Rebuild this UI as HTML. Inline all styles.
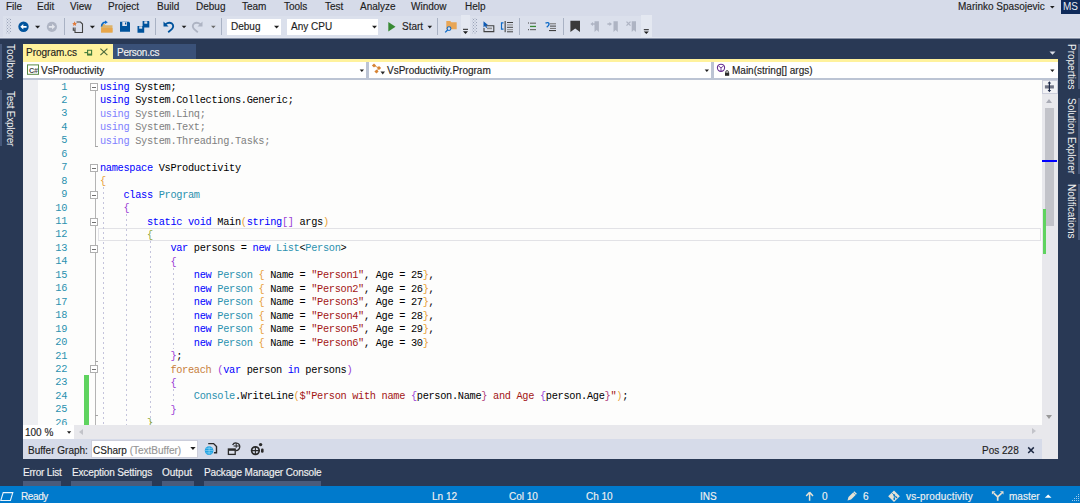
<!DOCTYPE html>
<html><head><meta charset="utf-8">
<style>
*{margin:0;padding:0;box-sizing:border-box}
html,body{width:1080px;height:503px;overflow:hidden;background:#293955;font-family:"Liberation Sans",sans-serif;font-size:10px;color:#1E1E1E}
.a{position:absolute}
.t{position:absolute;white-space:pre;line-height:12px;-webkit-text-stroke:0.15px}
.w{color:#F1F1F1}
.sep{position:absolute;top:18px;width:1px;height:17px;background:#A9B2C4}
.grip{position:absolute;top:18px;width:5px;height:16px;background-image:radial-gradient(circle,#9AA3B8 0.55px,transparent 0.75px),radial-gradient(circle,#9AA3B8 0.55px,transparent 0.75px);background-size:3px 3px;background-position:0 0,1.5px 1.5px}
.dd{position:absolute;width:0;height:0;border-left:2.5px solid transparent;border-right:2.5px solid transparent;border-top:3px solid #1E1E1E}
.combo{position:absolute;background:#FFFFFF}
.vt{position:absolute;writing-mode:vertical-rl;white-space:pre;color:#F1F1F1;font-size:10px;line-height:12px}
.code{position:absolute;left:100px;font-family:"Liberation Mono",monospace;font-size:10.3px;letter-spacing:-0.314px;white-space:pre;line-height:13.45px;color:#000}
.ln{position:absolute;font-family:"Liberation Mono",monospace;font-size:10.3px;letter-spacing:-0.314px;white-space:pre;color:#2B91AF;text-align:right;width:30px;line-height:13.45px}
.k{color:#0000FF}.ty{color:#2B91AF}.s{color:#A31515}.g{color:#808080}.gk{color:#8080FF}
.fk{color:#C8803C}.b2r{color:#B0407A}
.b1{color:#E8A13A}.b2{color:#9B3FD6}.b3{color:#92A83A}
.box{position:absolute;left:90px;width:8px;height:8px;border:1px solid #B0B0B0;background:#fff}
.box:after{content:"";position:absolute;left:1px;top:2.5px;width:4px;height:1px;background:#707070}
.tick{position:absolute;left:95px;width:3px;height:1px;background:#A5A5A5}
.guide{position:absolute;width:1px;background-image:linear-gradient(#C4C4DC 45%,transparent 45%);background-size:1px 5px}
</style></head><body>
<!-- menu + toolbar -->
<div class="a" style="left:0;top:0;width:1080px;height:39px;background:#D6DBE9"></div>
<div class="a" style="left:3px;top:16px;width:462px;height:21px;background:#DBE0EC"></div>
<div class="a" style="left:470px;top:16px;width:182px;height:21px;background:#DBE0EC"></div>
<div class="a" style="left:461px;top:15px;width:9px;height:22px;background:#E4E8F1"></div>
<div class="a" style="left:641px;top:15px;width:11px;height:22px;background:#E4E8F1"></div>
<div class="a" style="left:0;top:37px;width:1080px;height:1px;background:#E0E4EE"></div>
<div class="a" style="left:0;top:38px;width:1080px;height:1px;background:#8690A6"></div>

<div class="t" style="left:6px;top:1px">File</div>
<div class="t" style="left:37px;top:1px">Edit</div>
<div class="t" style="left:70px;top:1px">View</div>
<div class="t" style="left:108px;top:1px">Project</div>
<div class="t" style="left:157px;top:1px">Build</div>
<div class="t" style="left:196px;top:1px">Debug</div>
<div class="t" style="left:242px;top:1px">Team</div>
<div class="t" style="left:284px;top:1px">Tools</div>
<div class="t" style="left:325px;top:1px">Test</div>
<div class="t" style="left:360px;top:1px">Analyze</div>
<div class="t" style="left:411px;top:1px">Window</div>
<div class="t" style="left:465px;top:1px">Help</div>
<div class="t" style="left:958px;top:1px">Marinko Spasojevic</div>
<div class="a" style="left:1061px;top:0;width:19px;height:14px;background:#0F2A5A"></div>
<div class="t" style="left:1063px;top:1px;color:#E6E8F0;-webkit-text-stroke:0">MS</div>

<div class="grip" style="left:6px"></div>
<div class="sep" style="left:64px"></div>
<div class="sep" style="left:155px"></div>
<div class="sep" style="left:221px"></div>
<div class="combo" style="left:227px;top:19px;width:54px;height:16px"></div>
<div class="t" style="left:231px;top:21px">Debug</div>
<div class="combo" style="left:287px;top:19px;width:91px;height:16px"></div>
<div class="t" style="left:291px;top:21px">Any CPU</div>
<div class="t" style="left:402px;top:21px">Start</div>
<div class="sep" style="left:437px"></div>
<div class="grip" style="left:472px"></div>
<div class="sep" style="left:519px"></div>
<div class="sep" style="left:563px"></div>
<!-- side bars -->
<div class="a" style="left:0;top:44px;width:2px;height:36px;background:#46587A"></div>
<div class="a" style="left:0;top:90px;width:2px;height:56px;background:#46587A"></div>
<div class="vt" style="left:4px;top:44px">Toolbox</div>
<div class="vt" style="left:4px;top:91px;letter-spacing:-0.25px">Test Explorer</div>
<div class="a" style="left:1078px;top:44px;width:2px;height:45px;background:#46587A"></div>
<div class="a" style="left:1078px;top:98px;width:2px;height:76px;background:#46587A"></div>
<div class="a" style="left:1078px;top:184px;width:2px;height:56px;background:#46587A"></div>
<div class="vt" style="left:1065px;top:44px">Properties</div>
<div class="vt" style="left:1065px;top:98px">Solution Explorer</div>
<div class="vt" style="left:1065px;top:184px">Notifications</div>

<!-- tabs -->
<div class="a" style="left:23px;top:44px;width:90px;height:17px;background:#FFF29D"></div>
<div class="a" style="left:113px;top:44px;width:83px;height:15px;background:#3A5178"></div>
<div class="t" style="left:26px;top:47px">Program.cs</div>
<div class="t w" style="left:117px;top:47px;letter-spacing:-0.25px">Person.cs</div>
<div class="a" style="left:23px;top:59px;width:1035px;height:3px;background:#FFF29D"></div>

<!-- navbar -->
<div class="a" style="left:23px;top:62px;width:1035px;height:16px;background:#FFFFFF"></div>
<div class="a" style="left:23px;top:78px;width:1035px;height:2px;background:#BCC4D4"></div>
<div class="a" style="left:366px;top:62px;width:3px;height:16px;background:#BCC4D4"></div>
<div class="a" style="left:711px;top:62px;width:3px;height:16px;background:#BCC4D4"></div>
<div class="t" style="left:41px;top:65px">VsProductivity</div>
<div class="t" style="left:387px;top:65px">VsProductivity.Program</div>
<div class="t" style="left:732px;top:65px">Main(string[] args)</div>

<!-- editor -->
<div class="a" style="left:23px;top:80px;width:1019px;height:345px;background:#FDFDFC"></div>
<div class="a" style="left:23px;top:80px;width:15px;height:345px;background:#EDEEF1"></div>
<div class="a" style="left:98px;top:228px;width:943px;height:13px;border:1px solid #E2E2E6"></div>
<div class="a" style="left:84px;top:375px;width:5px;height:50px;background:#5FD35F"></div>
<div class="a" style="left:95px;top:91px;width:1px;height:56px;background:#B4B4B4"></div>
<div class="tick" style="top:146px"></div>
<div class="a" style="left:95px;top:172px;width:1px;height:253px;background:#B4B4B4"></div>
<div class="tick" style="top:361px"></div>
<div class="tick" style="top:415px"></div>
<div class="box" style="top:83px"></div>
<div class="box" style="top:164px"></div>
<div class="box" style="top:191px"></div>
<div class="box" style="top:218px"></div>
<div class="box" style="top:245px"></div>
<div class="box" style="top:365px"></div>
<div class="guide" style="left:103px;top:187px;height:238px"></div>
<div class="guide" style="left:126px;top:214px;height:211px"></div>
<div class="guide" style="left:150px;top:241px;height:184px"></div>
<div class="guide" style="left:173px;top:268px;height:81px"></div>
<div class="guide" style="left:173px;top:389px;height:14px"></div>
<div class="code" id="code" style="top:81px"><span class="k">using</span> System;
<span class="k">using</span> System.Collections.Generic;
<span class="gk">using</span><span class="g"> System.Linq;</span>
<span class="gk">using</span><span class="g"> System.Text;</span>
<span class="gk">using</span><span class="g"> System.Threading.Tasks;</span>

<span class="k">namespace</span> VsProductivity
<span class="b1">{</span>
    <span class="k">class</span> <span class="ty">Program</span>
    <span class="b2">{</span>
        <span class="k">static</span> <span class="k">void</span> Main<span class="b1">(</span><span class="k">string</span><span class="b2">[]</span> args<span class="b1">)</span>
        <span class="b3">{</span>
            <span class="k">var</span> persons = <span class="k">new</span> <span class="ty">List</span>&lt;<span class="ty">Person</span>&gt;
            <span class="b2">{</span>
                <span class="k">new</span> <span class="ty">Person</span> <span class="b1">{</span> Name = <span class="s">"Person1"</span>, Age = 25<span class="b1">}</span>,
                <span class="k">new</span> <span class="ty">Person</span> <span class="b1">{</span> Name = <span class="s">"Person2"</span>, Age = 26<span class="b1">}</span>,
                <span class="k">new</span> <span class="ty">Person</span> <span class="b1">{</span> Name = <span class="s">"Person3"</span>, Age = 27<span class="b1">}</span>,
                <span class="k">new</span> <span class="ty">Person</span> <span class="b1">{</span> Name = <span class="s">"Person4"</span>, Age = 28<span class="b1">}</span>,
                <span class="k">new</span> <span class="ty">Person</span> <span class="b1">{</span> Name = <span class="s">"Person5"</span>, Age = 29<span class="b1">}</span>,
                <span class="k">new</span> <span class="ty">Person</span> <span class="b1">{</span> Name = <span class="s">"Person6"</span>, Age = 30<span class="b1">}</span>
            <span class="b2">}</span>;
            <span class="fk">foreach</span> <span class="b2">(</span><span class="k">var</span> person <span class="k">in</span> persons<span class="b2">)</span>
            <span class="b2">{</span>
                <span class="ty">Console</span>.WriteLine<span class="b1">(</span><span class="s">$"Person with name </span><span class="b2">{</span>person.Name<span class="b2r">}</span><span class="s"> and Age </span><span class="b2">{</span>person.Age<span class="b2r">}</span><span class="s">"</span><span class="b1">)</span>;
            <span class="b2">}</span>
        <span class="b3">}</span></div>
<div class="ln" style="left:37px;top:80.5px">1
2
3
4
5
6
7
8
9
10
11
12
13
14
15
16
17
18
19
20
21
22
23
24
25
26</div>
<!-- scrollbar column -->
<div class="a" style="left:1042px;top:80px;width:16px;height:379px;background:#E8E8EC"></div>
<div class="a" style="left:1042px;top:80px;width:16px;height:14px;background:#F2F2F5;border:1px solid #CCCEDB"></div>
<div class="a" style="left:1045px;top:108px;width:9px;height:118px;background:#C2C3C9"></div>
<div class="a" style="left:1043px;top:209px;width:3px;height:45px;background:#5FD35F"></div>
<div class="a" style="left:1042px;top:160px;width:15px;height:2px;background:#0000FF"></div>
<div class="dd" style="left:1046px;top:99px;border-top:0;border-bottom:4px solid #A9ABB5;border-left-width:3.5px;border-right-width:3.5px"></div>
<div class="dd" style="left:1046px;top:415px;border-top:4px solid #999;border-left-width:3.5px;border-right-width:3.5px"></div>

<!-- hscroll + zoom -->
<div class="a" style="left:23px;top:425px;width:1019px;height:14px;background:#E8E8EC"></div>
<div class="combo" style="left:23px;top:425px;width:51px;height:14px"></div>
<div class="t" style="left:25px;top:427px">100 %</div>
<div class="a" style="left:79px;top:429px;width:0;height:0;border-top:3.5px solid transparent;border-bottom:3.5px solid transparent;border-right:4px solid #C2C3C9"></div>
<div class="a" style="left:1032px;top:428px;width:0;height:0;border-top:3.5px solid transparent;border-bottom:3.5px solid transparent;border-left:4px solid #C2C3C9"></div>

<!-- buffer graph bar -->
<div class="a" style="left:23px;top:439px;width:1019px;height:20px;background:#D6DBE9"></div>
<div class="t" style="left:28px;top:445px">Buffer Graph:</div>
<div class="combo" style="left:91px;top:440px;width:107px;height:18px;border:1px solid #CCCEDB"></div>
<div class="t" style="left:93px;top:445px">CSharp <span style="color:#969696">(TextBuffer)</span></div>
<div class="t" style="left:982px;top:445px">Pos 228</div>

<!-- bottom tabs -->
<div class="t w" style="left:23px;top:467px;letter-spacing:-0.2px">Error List</div>
<div class="t w" style="left:72px;top:467px;letter-spacing:-0.15px">Exception Settings</div>
<div class="t w" style="left:162px;top:467px">Output</div>
<div class="t w" style="left:204px;top:467px;letter-spacing:-0.14px">Package Manager Console</div>
<div class="a" style="left:23px;top:481px;width:38px;height:5px;background:#4A5B7B"></div>
<div class="a" style="left:71px;top:481px;width:81px;height:5px;background:#4A5B7B"></div>
<div class="a" style="left:162px;top:481px;width:32px;height:5px;background:#4A5B7B"></div>
<div class="a" style="left:204px;top:481px;width:117px;height:5px;background:#4A5B7B"></div>

<!-- status bar -->
<div class="a" style="left:0;top:486px;width:1080px;height:17px;background:#007ACC"></div>
<div class="t w" style="left:21px;top:491px;letter-spacing:-0.4px">Ready</div>
<div class="t w" style="left:432px;top:491px">Ln 12</div>
<div class="t w" style="left:509px;top:491px">Col 10</div>
<div class="t w" style="left:586px;top:491px">Ch 10</div>
<div class="t w" style="left:700px;top:491px">INS</div>
<div class="t w" style="left:822px;top:491px">0</div>
<div class="t w" style="left:863px;top:491px">6</div>
<div class="t w" style="left:906px;top:491px;letter-spacing:0.2px">vs-productivity</div>
<div class="t w" style="left:1009px;top:491px">master</div>
<svg class="a" style="left:0;top:0" width="1080" height="503" viewBox="0 0 1080 503">
<!-- back / forward -->
<circle cx="23.5" cy="26.8" r="5.2" fill="#00539C"/>
<path d="M20.3 26.8 L23.3 24 L23.3 25.9 L26.6 25.9 L26.6 27.7 L23.3 27.7 L23.3 29.6 Z" fill="#fff"/>
<circle cx="51.9" cy="26.8" r="5.1" fill="#AEB4C3"/>
<path d="M55.1 26.8 L52.1 24 L52.1 25.9 L48.8 25.9 L48.8 27.7 L52.1 27.7 L52.1 29.6 Z" fill="#E4E7EE"/>
<path d="M35 25.8 h5.2 l-2.6 2.7z" fill="#1E1E1E"/>
<!-- new project -->
<path d="M76.5 22 h4 l2 2 v8.5 h-7.5 v-5" fill="none" stroke="#424242" stroke-width="1.1"/>
<path d="M73.3 27.5 v2.8 h1.6" fill="none" stroke="#424242" stroke-width="1.1"/>
<path d="M72.2 23.2 l1.6 -0.3 l0.8 -1.6 l0.8 1.6 l1.6 0.3 l-1.2 1.1 l0.3 1.6 l-1.5 -0.8 l-1.5 0.8 l0.3 -1.6z" fill="#E07A3A"/>
<path d="M89.8 25.8 h5.2 l-2.6 2.7z" fill="#1E1E1E"/>
<!-- open -->
<path d="M101 24 h3.5 l1 1.2 h7 v7.3 h-11.5z" fill="#DDB36A"/>
<path d="M101.5 28 h11 v4.5 h-11.5z" fill="#E8A64A"/>
<path d="M101.5 26.5 q0.5 -4.5 4.5 -4.2" fill="none" stroke="#0E6AC7" stroke-width="1.6"/>
<path d="M105 20.5 l2.8 1.8 l-2.8 1.8z" fill="#0E6AC7"/>
<!-- save -->
<path d="M120 21.8 h9 l1 1 v9 h-10z" fill="#00539C"/>
<rect x="122.3" y="22" width="4.6" height="4" fill="#DCE1EC"/>
<rect x="125" y="22.5" width="1.2" height="2" fill="#00539C"/>
<!-- save all -->
<path d="M142.6 20.9 h6 l0.7 0.7 v6 h-6.7z" fill="#00539C"/>
<rect x="144.3" y="21.3" width="3" height="2.4" fill="#DCE1EC"/>
<path d="M137.5 26 h6 l0.7 0.7 v6 h-6.7z" fill="#00539C"/>
<rect x="139.2" y="26.3" width="3" height="2.4" fill="#DCE1EC"/>
<!-- undo / redo -->
<path d="M165.5 24.2 q3.5 -2.6 6.5 -0.6 q2.5 2.4 -0.2 5.6 l-3.6 3" fill="none" stroke="#00539C" stroke-width="1.8"/>
<path d="M163.5 21.5 v5 h5z" fill="#00539C"/>
<path d="M181.7 25.8 h4.7 l-2.35 2.5z" fill="#1E1E1E"/>
<path d="M200.5 24.2 q-3.5 -2.6 -6.5 -0.6 q-2.5 2.4 0.2 5.6 l3.6 3" fill="none" stroke="#AEB4C3" stroke-width="1.8"/>
<path d="M202.5 21.5 v5 h-5z" fill="#AEB4C3"/>
<path d="M211 25.8 h4.7 l-2.35 2.5z" fill="#6A6A6A"/>
<!-- start -->
<path d="M388.3 22 L395.5 26.8 L388.3 31.5z" fill="#388A34"/>
<!-- find in files -->
<path d="M446.3 21 h4 l1 1.2 h5.4 v7.1 h-10.4z" fill="#E8A656"/>
<circle cx="449" cy="28.6" r="1.9" fill="#DCE1EC" stroke="#0E6AC7" stroke-width="1.1"/>
<path d="M447.6 30 l-2.4 2.4" stroke="#0E6AC7" stroke-width="1.3"/>
<rect x="463" y="28.8" width="5" height="1" fill="#1E1E1E"/>
<path d="M463 31.2 h5 l-2.5 2.8z" fill="#1E1E1E"/>
<!-- toolbar 2 -->
<path d="M483.5 21.3 l4.5 3.8 l-2 0.4 l1.2 2 l-1 0.5 l-1.2 -2 l-1.5 1.4z" fill="#0E5BB5"/>
<path d="M486 25.8 h7.8 v5.8 h-9.8 v-3.5" fill="none" stroke="#424242" stroke-width="1.1"/>
<rect x="487" y="27.6" width="5" height="1.6" fill="#8E8E8E"/>
<path d="M503.5 22.8 h-2 v6.4 h2" fill="none" stroke="#0E6AC7" stroke-width="1.2"/>
<rect x="504.6" y="21" width="1.1" height="11.2" fill="#424242"/>
<rect x="507" y="22" width="6" height="1" fill="#424242"/>
<rect x="507" y="24.4" width="6" height="1" fill="#8A8A8A"/>
<rect x="507" y="26.8" width="6" height="1" fill="#424242"/>
<rect x="507" y="29.2" width="6" height="1" fill="#8A8A8A"/>
<rect x="507" y="31.3" width="6" height="1" fill="#424242"/>
<!-- comment / uncomment -->
<rect x="528" y="22.5" width="1" height="1" fill="#424242"/>
<rect x="530" y="22.6" width="6" height="1.2" fill="#6E6E6E"/>
<rect x="530" y="25.8" width="6" height="1.3" fill="#388A34"/>
<rect x="530" y="29" width="6" height="1.2" fill="#6E6E6E"/>
<rect x="528" y="29.2" width="1" height="1" fill="#424242"/>
<path d="M545.5 23.2 q3 -1.5 3.6 0.8 q0 1.5 -2.4 3.2" fill="none" stroke="#0E6AC7" stroke-width="1.4"/>
<rect x="550" y="23.3" width="6" height="1" fill="#6E6E6E"/>
<rect x="550" y="25.6" width="6" height="1" fill="#424242"/>
<rect x="550" y="27.9" width="6" height="1" fill="#6E6E6E"/>
<rect x="549" y="30" width="7" height="1.1" fill="#424242"/>
<!-- bookmarks -->
<path d="M570.4 20.8 h9.6 v11.1 l-4.8 -3.4 l-4.8 3.4z" fill="#3A3A3A"/>
<path d="M594.5 21.2 h4.4 v10.7 l-2.2 -1.8 l-2.2 1.8z" fill="#AEB4C3"/>
<path d="M590.4 24 l2.6 -2 v1.3 h2 v1.4 h-2 v1.3z" fill="#AEB4C3"/>
<path d="M613.5 21.2 h4.3 v10.7 l-2.15 -1.8 l-2.15 1.8z" fill="#AEB4C3"/>
<path d="M612 24 l-2.6 -2 v1.3 h-2 v1.4 h2 v1.3z" fill="#AEB4C3"/>
<path d="M631.7 21.2 h4.3 v10.7 l-2.15 -1.8 l-2.15 1.8z" fill="#AEB4C3"/>
<path d="M626.5 21.6 l4 4 m0 -4 l-4 4" stroke="#AEB4C3" stroke-width="1.3"/>
<rect x="643.8" y="29.2" width="5" height="1" fill="#1E1E1E"/>
<path d="M643.8 31.4 h5 l-2.5 2.7z" fill="#1E1E1E"/>
<path d="M274 25.8 h5.2 l-2.6 2.7z" fill="#1E1E1E"/>
<path d="M372 25.8 h5 l-2.5 2.7z" fill="#1E1E1E"/>
<path d="M427.5 25.8 h4.6 l-2.3 2.6z" fill="#1E1E1E"/>
<path d="M1050 6 h4.6 l-2.3 2.4z" fill="#1E1E1E"/>
</svg>
<svg class="a" style="left:0;top:0" width="1080" height="503" viewBox="0 0 1080 503">
<!-- tab pin / close -->
<path d="M84.4 52.6 h3" stroke="#3F7A3A" stroke-width="1.1"/>
<path d="M87.6 50.3 h4 v4.6 h-4z" fill="none" stroke="#3F7A3A" stroke-width="1.1"/>
<rect x="87.4" y="53.6" width="4.6" height="1.6" fill="#3F7A3A"/>
<path d="M100.4 48.6 l7 6.5 m0 -6.5 l-7 6.5" stroke="#4E6B3C" stroke-width="1.2"/>
<!-- C# icon -->
<rect x="27.5" y="64.9" width="11" height="9.4" fill="#fff" stroke="#5A8A45" stroke-width="1"/>
<text x="29" y="72.6" font-family="Liberation Sans" font-size="7.2" font-weight="bold" fill="#4A4A4A" letter-spacing="-0.3">C#</text>
<!-- class icon -->
<g fill="#D78435">
<rect x="372.5" y="64" width="3" height="3" transform="rotate(45 374 65.5)"/>
<rect x="377.5" y="66.5" width="3" height="3" transform="rotate(45 379 68)"/>
<rect x="375" y="70" width="3" height="3" transform="rotate(45 376.5 71.5)"/>
</g>
<path d="M374 65.5 L379 68 L376.5 71.5" stroke="#D78435" stroke-width="0.8" fill="none"/>
<path d="M380.5 71.5 h4.5 l-2.25 3z" fill="#2A2A2A"/>
<!-- method icon -->
<circle cx="721" cy="67.8" r="3.6" fill="none" stroke="#652D90" stroke-width="1.1"/>
<path d="M721 67.8 v3.3 M721 67.8 l-2.6 -1.9 M721 67.8 l2.6 -1.9" stroke="#652D90" stroke-width="0.9"/>
<rect x="725" y="72.6" width="4.2" height="3.2" fill="#2A2A2A"/>
<path d="M725.8 72.8 v-0.9 a1.3 1.3 0 0 1 2.6 0 v0.9" fill="none" stroke="#2A2A2A" stroke-width="0.9"/>
<!-- dropdown arrows nav -->
<path d="M359.7 69.5 h4.3 l-2.15 2.4z" fill="#1E1E1E"/>
<path d="M704.7 69.5 h4.3 l-2.15 2.4z" fill="#1E1E1E"/>
<path d="M1050.2 69.5 h4.3 l-2.15 2.4z" fill="#1E1E1E"/>
<!-- tab list dropdown -->
<path d="M1049.5 51.5 h6 l-3 3.2z" fill="#D8DCE6"/>
<rect x="1044.9" y="85.3" width="9" height="3.2" fill="#6F7384"/>
<path d="M1049.4 82.5 v8.5" stroke="#1E2A4A" stroke-width="1.2"/>
<path d="M1047.6 83.6 l1.8 -2.3 l1.8 2.3z M1047.6 89.9 l1.8 2.3 l1.8 -2.3z" fill="#1E2A4A"/>
</svg>
<svg class="a" style="left:0;top:0" width="1080" height="503" viewBox="0 0 1080 503">
<!-- buffer graph icons -->
<path d="M208.2 443.6 h5.4 l2.9 2.9 v6.3 h-2.6" fill="none" stroke="#2A2A2A" stroke-width="1.4"/>
<circle cx="209.1" cy="450.6" r="4.3" fill="#1BA1E2"/>
<path d="M205.2 450.6 h7.8 M209.1 446.6 v8 M206.2 448.3 h5.8 M206.2 452.9 h5.8" stroke="#A8DDF5" stroke-width="0.6"/>
<rect x="228.4" y="449" width="6.8" height="5.4" fill="#DCE1EC" stroke="#2A2A2A" stroke-width="1.3"/>
<rect x="228.4" y="449" width="6.8" height="1.8" fill="#2A2A2A"/>
<path d="M232.6 445 a3.8 3.8 0 1 1 3 5.6" fill="none" stroke="#2A2A2A" stroke-width="1.3"/>
<path d="M236.2 443 v4.8 M233.6 446 h5.4" stroke="#2A2A2A" stroke-width="1"/>
<circle cx="255.4" cy="450.6" r="3.8" fill="none" stroke="#2A2A2A" stroke-width="1.7"/>
<path d="M251.6 450.6 h7.6 M255.4 446.8 v7.6" stroke="#2A2A2A" stroke-width="1.1"/>
<circle cx="260.6" cy="444.6" r="1.7" fill="#2A2A2A"/>
<rect x="261" y="448.6" width="2.6" height="4.2" rx="1.2" fill="#2A2A2A"/>
<path d="M1028.2 447.4 l5.6 5.6 m0 -5.6 l-5.6 5.6" stroke="#1E2A44" stroke-width="1.5"/>
<path d="M190.3 447 h5.3 l-2.65 2.9z" fill="#1E1E1E"/>
<path d="M67 431.3 h4.2 l-2.1 2.4z" fill="#1E1E1E"/>
<!-- status bar -->
<path d="M3.2 492.6 h9.6 l-2.4 7.9 h-9.6z" fill="none" stroke="#EAF4FB" stroke-width="1.1"/>
<path d="M809.6 492.3 l-3.4 3.6 m3.4 -3.6 l3.4 3.6 m-3.4 -3.6 v8.5" stroke="#E8E2D4" stroke-width="1.5" fill="none"/>
<path d="M847.5 500.6 l1 -3.6 l5.8 -5.8 l2.6 2.6 l-5.8 5.8z" fill="#E8E2D4"/><path d="M853.2 492.3 l2.6 2.6" stroke="#007ACC" stroke-width="0.6"/>
<path d="M894 490.4 l5.8 5.8 l-5.8 5.8 l-5.8 -5.8z" fill="#E8E2D4"/>
<path d="M892.3 493.2 l2 2 v4 M894.3 495.2 l2 2" stroke="#007ACC" stroke-width="0.9" fill="none"/>
<circle cx="894.3" cy="495.2" r="0.9" fill="#007ACC"/><circle cx="894.3" cy="499" r="0.9" fill="#007ACC"/><circle cx="896.4" cy="497.3" r="0.9" fill="#007ACC"/>
<path d="M997.7 500.8 v-4 l-4 -3.6 M997.7 496.8 l4 -3.6" stroke="#E8E2D4" stroke-width="1.7" fill="none"/>
<path d="M991.9 491.2 h3.6 l-3.6 3.4z M1003.5 491.2 h-3.6 l3.6 3.4z" fill="#E8E2D4"/>
<path d="M1044.8 497.8 l3.35 -3.2 l3.35 3.2z" fill="#fff"/>
<g fill="#9FC9EA"><rect x="1078" y="494" width="1" height="1"/><rect x="1076" y="496" width="1" height="1"/><rect x="1078" y="496" width="1" height="1"/><rect x="1074" y="498" width="1" height="1"/><rect x="1076" y="498" width="1" height="1"/><rect x="1078" y="498" width="1" height="1"/><rect x="1072" y="500" width="1" height="1"/><rect x="1074" y="500" width="1" height="1"/><rect x="1076" y="500" width="1" height="1"/><rect x="1078" y="500" width="1" height="1"/></g>
</svg>
</body></html>
